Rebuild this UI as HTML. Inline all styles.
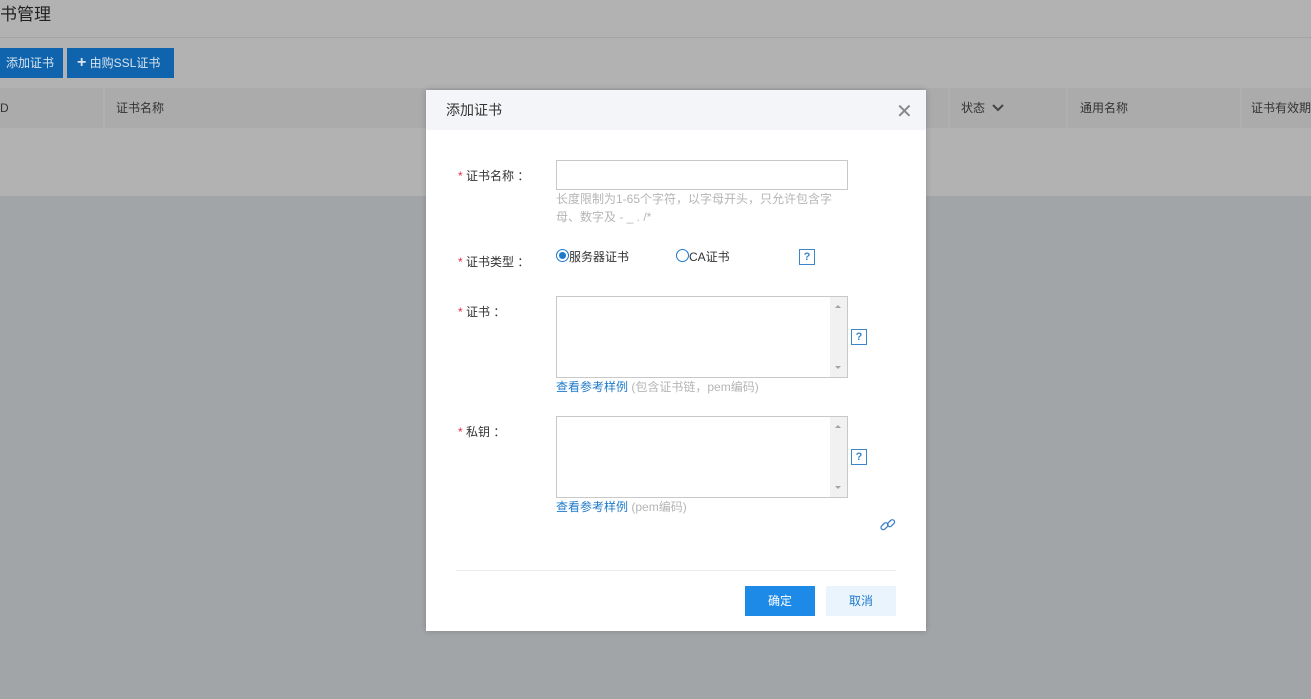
<!DOCTYPE html>
<html><head><meta charset="utf-8">
<style>
*{margin:0;padding:0;box-sizing:border-box}
body{width:1311px;height:699px;overflow:hidden;position:relative;background:#a2a5a8;font-family:"Liberation Sans","Noto Sans CJK SC",sans-serif;font-size:12px;color:#333}
.a{position:absolute}
.top{left:0;top:0;width:1311px;height:196px;background:#b2b2b2}
.th{top:88px;height:40px;background:#ababab;color:#333;line-height:40px;font-size:12px}
.btn{top:48px;height:30px;background:#0f64ad;color:#d8e4ef;line-height:30px;font-size:12px}
.dlg{left:426px;top:90px;width:500px;height:541px;background:#fff;box-shadow:0 0 6px rgba(0,0,0,.2)}
.hd{left:0;top:0;width:500px;height:40px;background:#f4f5f8;line-height:40px;padding-left:20px;font-size:14px;color:#333}
.lbl{font-size:12px;color:#333}
.lbl b{color:#e0304a;font-weight:normal}
.q{width:16px;height:16px;border:1px solid #3b86c8;color:#3b86c8;font-size:11px;text-align:center;line-height:14px;font-weight:bold}
.ta{width:292px;height:82px;border:1px solid #c8c8c8}
.ta .sb{position:absolute;right:0;top:0;width:17px;height:80px;background:#f1f1f1}
.ta .sb:before{content:"";position:absolute;left:5px;top:8px;border:3px solid transparent;border-bottom-color:#a3a3a3;border-top:0}
.ta .sb:after{content:"";position:absolute;left:5px;bottom:8px;border:3px solid transparent;border-top-color:#a3a3a3;border-bottom:0}
.tip{color:#b5b5b5;font-size:12px}
.lk{color:#1e7acb}
</style></head><body>
<div class="a top"></div>
<div class="a" style="left:0;top:0;font-size:17px;color:#222">书管理</div>
<div class="a" style="left:0;top:37px;width:1311px;height:1px;background:#a4a4a4"></div>
<div class="a btn" style="left:0;width:63px;padding-left:6px">添加证书</div>
<div class="a btn" style="left:67px;width:107px;padding-left:10px"><span style="font-size:16px;font-weight:bold">+</span> 由购SSL证书</div>
<div class="a th" style="left:0;width:1311px"></div>
<div class="a th" style="left:0;padding-left:0">D</div>
<div class="a" style="left:103px;top:88px;width:2px;height:40px;background:#b0b0b0"></div>
<div class="a th" style="left:116px">证书名称</div>
<div class="a" style="left:948px;top:88px;width:2px;height:40px;background:#b0b0b0"></div>
<div class="a th" style="left:961px">状态</div>
<svg class="a" style="left:992px;top:103px" width="12" height="10" viewBox="0 0 12 10"><path d="M1 2 L6 7 L11 2" fill="none" stroke="#444" stroke-width="2"/></svg>
<div class="a" style="left:1066px;top:88px;width:2px;height:40px;background:#b0b0b0"></div>
<div class="a th" style="left:1080px">通用名称</div>
<div class="a" style="left:1240px;top:88px;width:2px;height:40px;background:#b0b0b0"></div>
<div class="a th" style="left:1251px;white-space:nowrap">证书有效期</div>

<div class="a dlg">
 <div class="a hd">添加证书</div>
 <div class="a" style="left:470px;top:9px;font-size:20px;color:#888">✕</div>

 <div class="a lbl" style="left:32px;top:77px"><b>*</b> 证书名称 ：</div>
 <div class="a" style="left:130px;top:70px;width:292px;height:30px;border:1px solid #c8c8c8"></div>
 <div class="a tip" style="left:130px;top:100px;width:290px;line-height:18px">长度限制为1-65个字符，以字母开头，只允许包含字母、数字及 - _ . /*</div>

 <div class="a lbl" style="left:32px;top:163px"><b>*</b> 证书类型 ：</div>
 <div class="a" style="left:130px;top:159px;width:13px;height:13px;border:1px solid #1e7acb;border-radius:50%"><div style="margin:2px;width:7px;height:7px;border-radius:50%;background:#1e7acb"></div></div>
 <div class="a lbl" style="left:143px;top:158px">服务器证书</div>
 <div class="a" style="left:250px;top:159px;width:13px;height:13px;border:1px solid #1e7acb;border-radius:50%"></div>
 <div class="a lbl" style="left:263px;top:158px">CA证书</div>
 <div class="a q" style="left:373px;top:159px">?</div>

 <div class="a lbl" style="left:32px;top:213px"><b>*</b> 证书 ：</div>
 <div class="a ta" style="left:130px;top:206px"><div class="sb"></div></div>
 <div class="a q" style="left:425px;top:239px">?</div>
 <div class="a" style="left:130px;top:288px"><span class="lk">查看参考样例</span> <span class="tip">(包含证书链，pem编码)</span></div>

 <div class="a lbl" style="left:32px;top:333px"><b>*</b> 私钥 ：</div>
 <div class="a ta" style="left:130px;top:326px"><div class="sb"></div></div>
 <div class="a q" style="left:425px;top:359px">?</div>
 <div class="a" style="left:130px;top:408px"><span class="lk">查看参考样例</span> <span class="tip">(pem编码)</span></div>
 <svg class="a" style="left:453px;top:426px" width="18" height="18" viewBox="0 0 18 18" fill="none" stroke="#3b7fc8" stroke-width="1.3"><rect x="1.5" y="8" width="8" height="4.5" rx="2.2" transform="rotate(-45 5.5 10.2)"/><rect x="8" y="5" width="8" height="4.5" rx="2.2" transform="rotate(-45 12 7.2)"/></svg>

 <div class="a" style="left:30px;top:480px;width:440px;height:1px;background:#eaeaea"></div>
 <div class="a" style="left:319px;top:496px;width:70px;height:30px;background:#1d8ae8;color:#fff;text-align:center;line-height:30px">确定</div>
 <div class="a" style="left:400px;top:496px;width:70px;height:30px;background:#eaf4fd;color:#1e7acb;text-align:center;line-height:30px">取消</div>
</div>
</body></html>
